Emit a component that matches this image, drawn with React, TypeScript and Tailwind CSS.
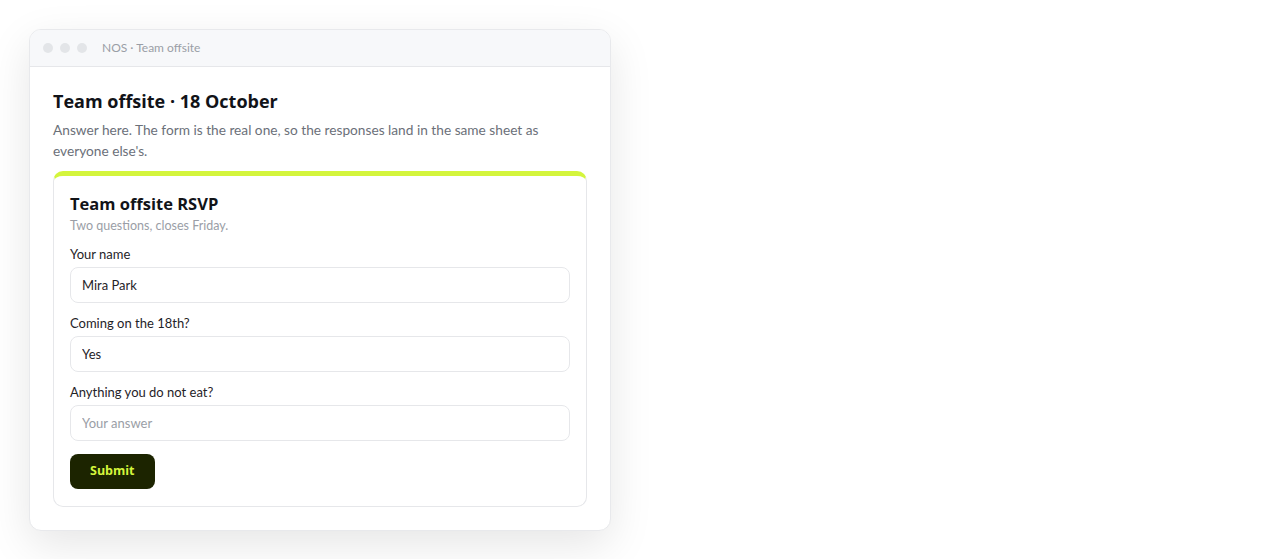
function Dot() {
  return <span className="size-[10px] rounded-full bg-[#e3e5e8]" />;
}

function Field({ label, value, placeholder }: { label: string; value?: string; placeholder?: string }) {
  return (
    <div className="flex flex-col gap-[3px]">
      <label className="text-[13px] leading-[20px] text-[#1f2328]">{label}</label>
      <input
        readOnly
        defaultValue={value}
        placeholder={placeholder}
        className="h-[36px] w-full rounded-[8px] border border-[#e6e7ea] bg-white px-[11px] text-[13px] text-[#1f2328] outline-none placeholder:text-[#9a9ea6]"
      />
    </div>
  );
}

export default function App() {
  return (
    <div className="min-h-[559px] w-[1280px] bg-white pl-[29px] pt-[29px] font-['Segoe_UI','Lato',sans-serif]">
      <div className="w-[582px] overflow-hidden rounded-[12px] border border-[#e8e9ec] bg-white shadow-[0_14px_44px_rgba(0,0,0,0.10)]">
        <div className="flex h-[37px] items-center gap-[7px] border-b border-[#e6e7ea] bg-[#f7f8fa] pl-[13px]">
          <Dot />
          <Dot />
          <Dot />
          <span className="ml-[8px] text-[12px] text-[#9a9ea6]">NOS · Team offsite</span>
        </div>
        <div className="px-[23px] pb-[23px] pt-[21px]">
          <h1 className="font-['Open_Sans',sans-serif] text-[18px] font-bold leading-[26px] text-[#111318]">
            Team offsite · 18 October
          </h1>
          <p className="mt-[5px] text-[13.7px] leading-[21px] text-[#6b7079]">
            Answer here. The form is the real one, so the responses land in the same sheet as everyone else's.
          </p>
          <div className="mt-[10px] overflow-hidden rounded-[10px] border border-[#e6e7ea] border-t-[5px] border-t-[#d4f53c] bg-white px-[16px] pb-[17px] pt-[16px]">
            <h2 className="font-['Open_Sans',sans-serif] text-[16.5px] font-bold leading-[24px] text-[#111318]">
              Team offsite RSVP
            </h2>
            <p className="text-[12.5px] leading-[20px] text-[#9a9ea6]">Two questions, closes Friday.</p>
            <div className="mt-[8px] flex flex-col gap-[10px]">
              <Field label="Your name" value="Mira Park" />
              <Field label="Coming on the 18th?" value="Yes" />
              <Field label="Anything you do not eat?" placeholder="Your answer" />
            </div>
            <button className="mt-[13px] h-[35px] rounded-[8px] bg-[#1c2400] px-[20px] font-['Open_Sans',sans-serif] text-[12.5px] font-bold text-[#d4f53c]">
              Submit
            </button>
          </div>
        </div>
      </div>
    </div>
  );
}
